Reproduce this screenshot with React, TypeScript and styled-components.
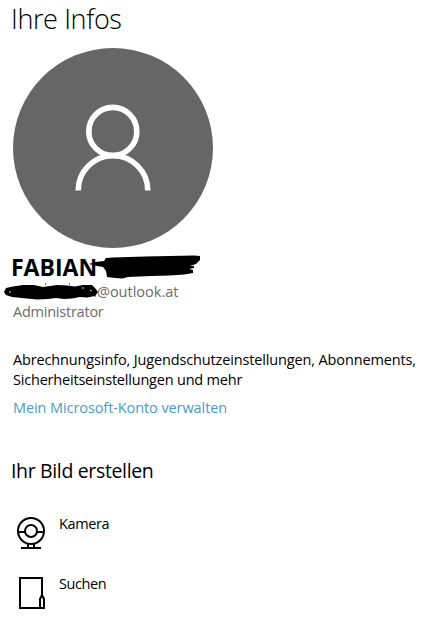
import React from 'react';
import styled, { createGlobalStyle } from 'styled-components';

const GlobalStyle = createGlobalStyle`
	body {
		margin: 0;
		background: #fff;
		color: #000;
		font-family: 'Open Sans', 'Noto Sans', sans-serif;
	}
`;

const Page = styled.main`
	box-sizing: border-box;
	width: 445px;
	height: 619px;
	padding: 1px 0 0 11px;
	overflow: hidden;
`;

const Title = styled.h1`
	margin: 0 0 11px;
	font-size: 27px;
	font-weight: 300;
	line-height: 36px;
	letter-spacing: -0.38px;
`;

const Avatar = styled.div`
	display: flex;
	width: 200px;
	height: 200px;
	margin-left: 2px;
	border-radius: 50%;
	background: #666;
`;

const Name = styled.h2`
	position: relative;
	margin: 4px 0 0;
	font-size: 23px;
	font-weight: 700;
	line-height: 30px;
	letter-spacing: 0;
`;

const Detail = styled.div<{ $indent?: number; $spacing?: number }>`
	position: relative;
	padding-left: ${({ $indent = 2 }) => $indent}px;
	color: #6b6b6b;
	font-size: 14.5px;
	line-height: 20px;
	letter-spacing: ${({ $spacing = -0.23 }) => $spacing}px;
`;

const Scribble = styled.svg<{ $left: number; $top: number }>`
	position: absolute;
	left: ${({ $left }) => $left}px;
	top: ${({ $top }) => $top}px;
`;

const Text = styled.p<{ $spacing: number }>`
	margin: 0 0 0 2px;
	font-size: 14.5px;
	line-height: 20px;
	letter-spacing: ${({ $spacing }) => $spacing}px;
	white-space: nowrap;
`;

const Description = styled.div`
	margin-top: 28px;
`;

const AccountLink = styled.a`
	display: block;
	margin: 8px 0 0 2px;
	color: #4a9cc9;
	font-size: 14.5px;
	line-height: 20px;
	letter-spacing: -0.09px;
	text-decoration: none;
`;

const SectionTitle = styled.h3`
	margin: 39px 0 0;
	font-size: 19.5px;
	font-weight: 400;
	line-height: 28px;
	letter-spacing: -0.35px;
`;

const Options = styled.div`
	display: grid;
	grid-auto-rows: 60px;
	margin-top: 29px;
`;

const Option = styled.div`
	display: flex;
	gap: 8px;
	font-size: 14.5px;
	line-height: 20px;
	letter-spacing: -0.4px;

	svg {
		flex: none;
	}
`;

const PersonIcon = () => (
	<svg width="200" height="200" viewBox="0 0 200 200" fill="none" stroke="#fff" strokeWidth="5.6">
		<circle cx="99.8" cy="83.4" r="24" />
		<path d="M65.2 142.500A34.800 34.800 0 0 1 134.800 142.500" />
	</svg>
);

const CameraIcon = () => (
	<svg width="40" height="40" viewBox="0 0 40 40" fill="none" stroke="#000" strokeWidth="2">
		<circle cx="20" cy="17" r="13" />
		<circle cx="20" cy="17" r="6" />
		<path d="M7 18h7M26 18h7M17 29v4M23 29v4M10 34h20" />
	</svg>
);

const FolderIcon = () => (
	<svg width="40" height="40" viewBox="0 0 40 40" fill="none" stroke="#000" strokeWidth="2">
		<path d="M31 21V4H9v30h22" />
		<path d="M29 34V25l1.500-3h1l1.500 3v9z" />
	</svg>
);

const NameScribble = () => (
	<Scribble $left={76} $top={2} width="116" height="28" viewBox="87 254 116 28">
		<path
			fill="#000"
			d="M89 264L95 262L104 261L106 258L113 257.500L145 256.500L194 255.500L200 256L200 260L196 264L190 266L194 266L194 268L189 269L193 270L193 273L184 274.500L170 275.500L151 276L128 277L122 278.500L115 278L107 277L106 271L103 267L97 266Z"
		/>
	</Scribble>
);

const EmailScribble = () => (
	<Scribble $left={-8} $top={-2} width="96" height="20" viewBox="3 280 96 20">
		<path
			fill="#000"
			d="M4 292L6 288L13 286.500L23 285L34 285L43 287L50 286L57 285L67 285.500L75 286.500L83 285L92 285L95 288L98 292L95 296L87 297.500L80 297L72 298.500L64 299L56 298L48 299L37 299.500L27 298.500L12 297L6 295Z"
		/>
		<path stroke="#777" d="M45.500 283v2M69.500 283v2" />
		<path stroke="#ccc" d="M9 292h2M82 288h2M90 290l2 1" />
	</Scribble>
);

const App: React.FC = () => {
	return (
		<>
			<GlobalStyle />
			<Page>
				<Title>Ihre Infos</Title>
				<Avatar>
					<PersonIcon />
				</Avatar>
				<Name>
					FABIAN
					<NameScribble />
				</Name>
				<Detail $indent={77} $spacing={0}>
					n@outlook.at
					<EmailScribble />
				</Detail>
				<Detail>Administrator</Detail>
				<Description>
					<Text $spacing={-0.14}>Abrechnungsinfo, Jugendschutzeinstellungen, Abonnements,</Text>
					<Text $spacing={-0.2}>Sicherheitseinstellungen und mehr</Text>
				</Description>
				<AccountLink>Mein Microsoft-Konto verwalten</AccountLink>
				<SectionTitle>Ihr Bild erstellen</SectionTitle>
				<Options>
					<Option>
						<CameraIcon />
						Kamera
					</Option>
					<Option>
						<FolderIcon />
						Suchen
					</Option>
				</Options>
			</Page>
		</>
	);
};

export default App;
